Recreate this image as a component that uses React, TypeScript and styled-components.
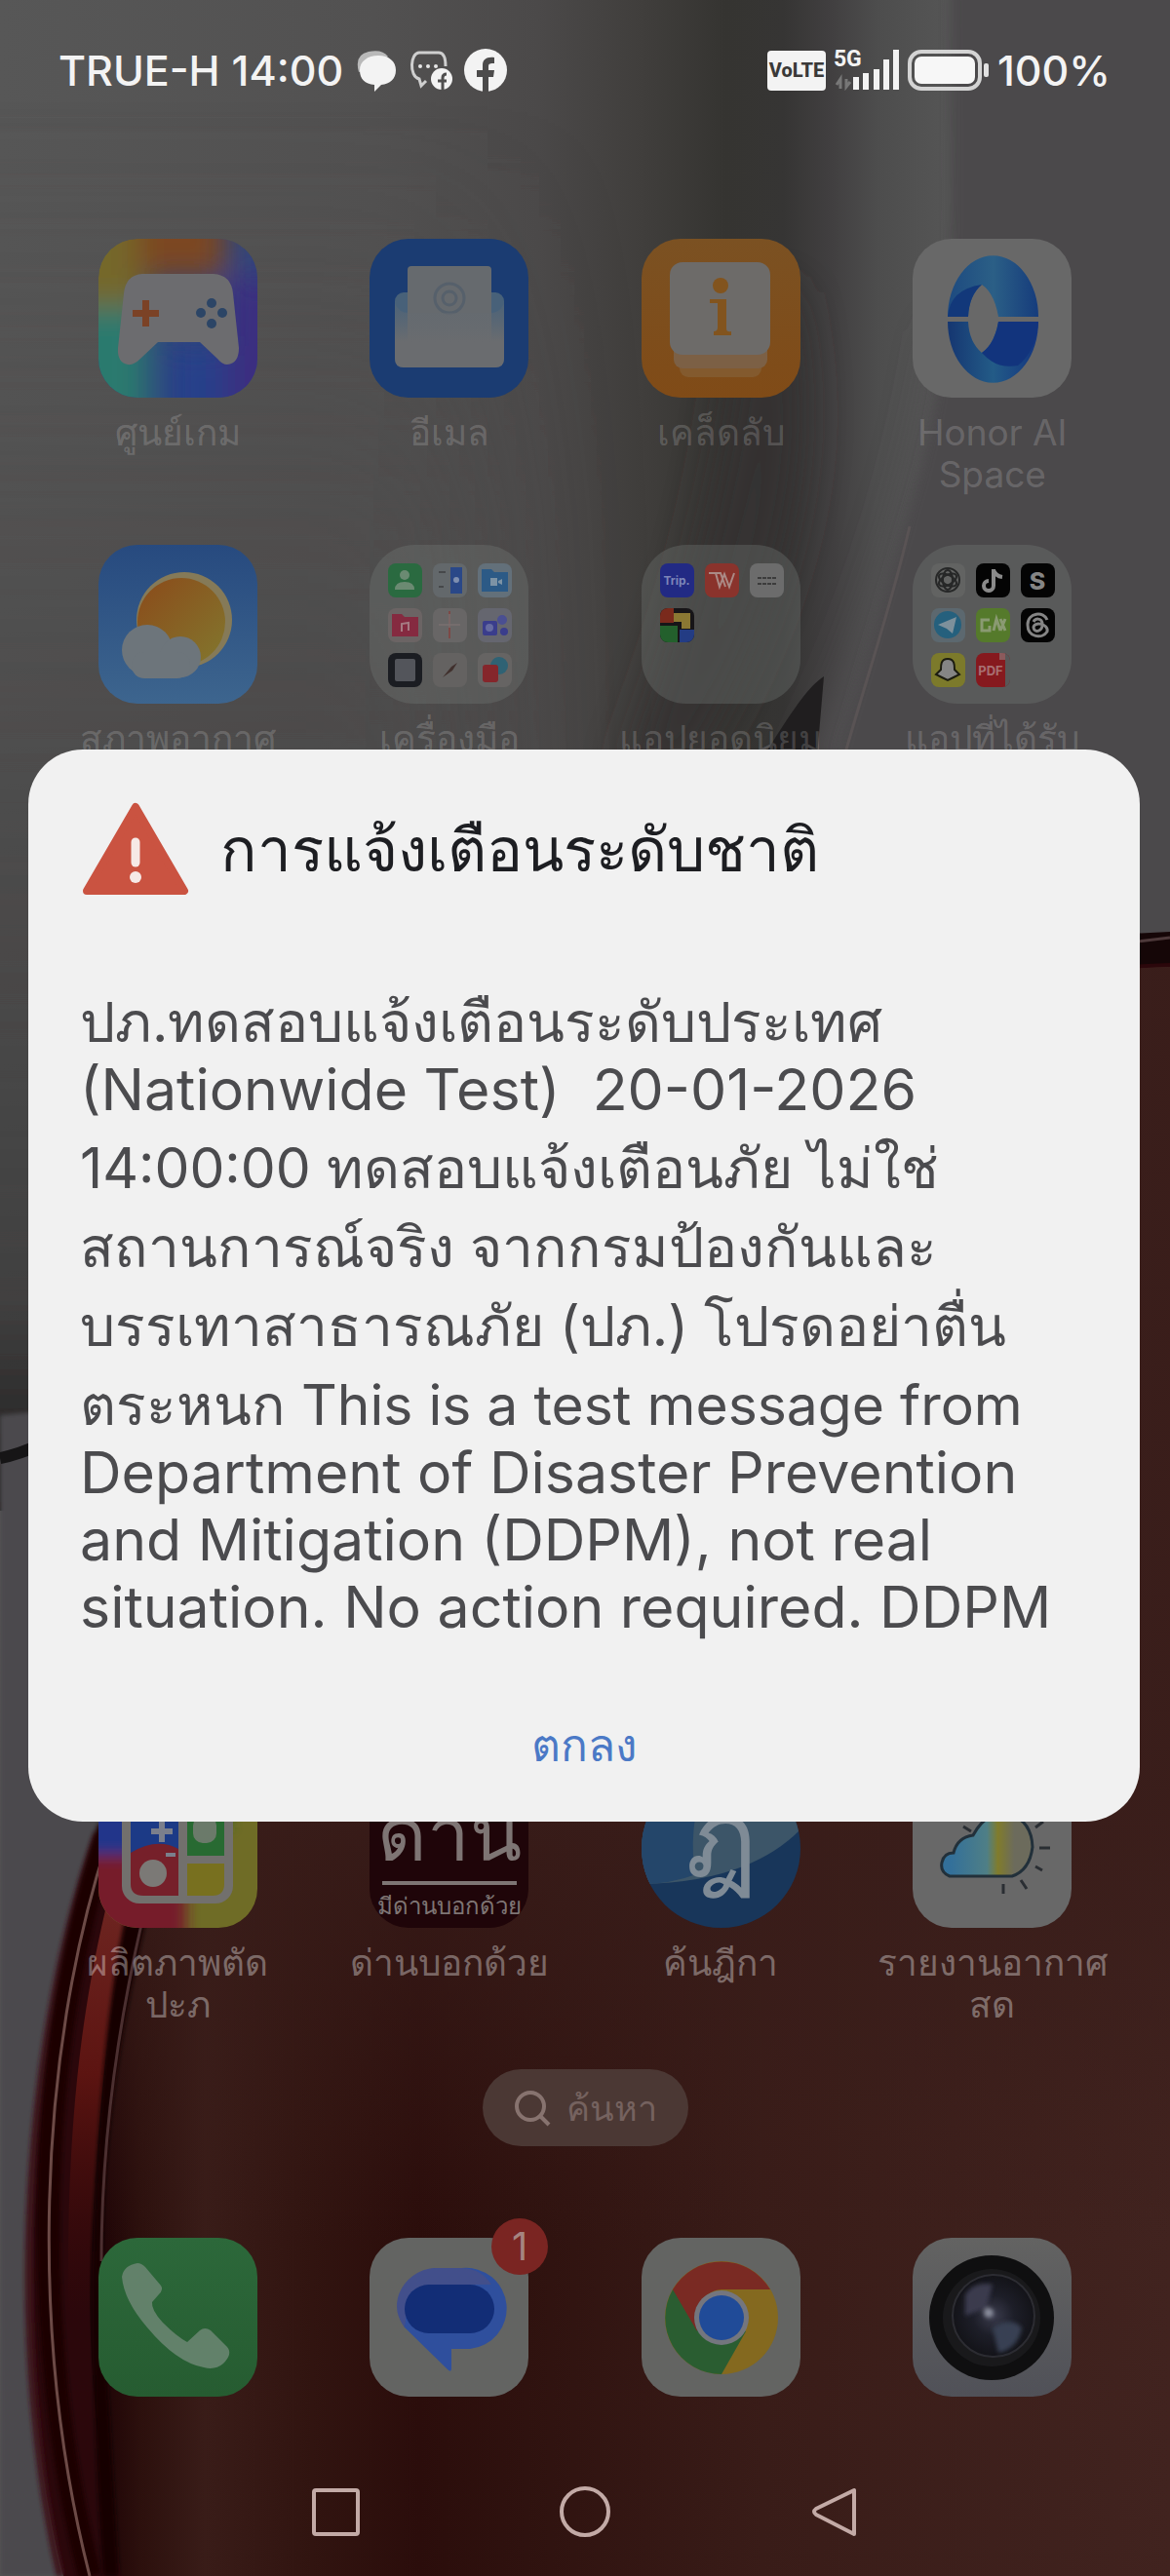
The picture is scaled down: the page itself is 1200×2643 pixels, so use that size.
import React from "react";
import type { ReactNode } from "react";
import styled, { createGlobalStyle } from "styled-components";

const GlobalStyle = createGlobalStyle`
  *, *::before, *::after { box-sizing: border-box; }
  html, body { margin: 0; padding: 0; background: #3a1f1c; }
  button { font: inherit; color: inherit; background: none; border: 0; padding: 0; cursor: pointer; }
  body { font-family: Inter, sans-serif; }
`;

/* ---------- shell ---------- */

const Phone = styled.main`
  position: relative;
  display: grid;
  min-height: 100vh;
  overflow: hidden;
`;

const WallpaperLayer = styled.svg`
  position: absolute;
  inset: 0;
  width: 100%;
  height: 100%;
`;

const Home = styled.div`
  grid-area: 1 / 1;
  position: relative;
  display: flex;
  flex-direction: column;
`;

const StatusBar = styled.header`
  display: flex;
  justify-content: space-between;
  align-items: center;
  height: 144px;
  padding: 0 61px 0 60px;
  color: #f3f3f3;
`;

const StatusGroup = styled.div<{ $gap: number }>`
  display: flex;
  align-items: center;
  gap: ${(p) => p.$gap}px;
  font-weight: 500;
`;

const StatusText = styled.span`
  font-size: 43px;
  line-height: 48px;
`;

const VolteBadge = styled.span`
  display: flex;
  align-items: center;
  justify-content: center;
  width: 60px;
  height: 41px;
  border-radius: 4px;
  background: #f3f3f3;
  color: #3a3938;
  font: 800 20px/24px Roboto, sans-serif;
`;

const SignalBlock = styled.span`
  display: grid;
  height: 42px;
`;

const NetworkText = styled.span`
  grid-area: 1 / 1;
  font: 700 23px/20px Roboto, sans-serif;
`;

const SignalArt = styled.svg`
  grid-area: 1 / 1;
`;

/* ---------- app grid ---------- */

const AppGrid = styled.section`
  display: grid;
  grid-template-columns: repeat(4, 1fr);
  grid-template-rows: repeat(5, 314px) 308px;
  padding: 101px 43px 0;
`;

const AppCell = styled.button<{ $row: number; $dim?: boolean }>`
  grid-row: ${(p) => p.$row};
  display: flex;
  flex-direction: column;
  align-items: center;
  gap: 14px;
  color: ${(p) => (p.$dim ? "rgba(255,255,255,0.18)" : "rgba(255,255,255,0.36)")};
`;

const IconTile = styled.span<{ $round?: boolean }>`
  display: block;
  flex: none;
  width: 163px;
  height: 163px;
  border-radius: ${(p) => (p.$round ? "50%" : "40px")};
  overflow: hidden;
`;

const AppLabel = styled.span`
  font-size: 37px;
  line-height: 43px;
  text-align: center;
  white-space: pre;
`;

const FolderTile = styled.span`
  display: grid;
  flex: none;
  grid-template-columns: repeat(3, 35px);
  grid-auto-rows: 35px;
  gap: 11px;
  width: 163px;
  height: 163px;
  padding: 19px;
  border-radius: 46px;
  background: rgba(118, 122, 120, 0.34);
`;

const Mini = styled.svg`
  display: block;
  width: 35px;
  height: 35px;
  border-radius: 8px;
`;

/* ---------- search, dock, navigation ---------- */

const SearchPill = styled.button`
  display: flex;
  align-items: center;
  justify-content: center;
  align-self: center;
  gap: 16px;
  width: 211px;
  height: 79px;
  border-radius: 40px;
  background: #4b3834;
  color: #75625f;
  font-size: 36px;
  line-height: 48px;
`;

const Dock = styled.nav`
  display: grid;
  grid-template-columns: repeat(4, 1fr);
  justify-items: center;
  margin-top: 94px;
  padding: 0 43px;
`;

const DockButton = styled.button`
  position: relative;
  display: block;
`;

const Badge = styled.span`
  position: absolute;
  top: -20px;
  right: -20px;
  width: 58px;
  height: 58px;
  border-radius: 50%;
  background: #7a2522;
  color: #a58481;
  font-size: 40px;
  line-height: 58px;
  text-align: center;
`;

const SystemNav = styled.nav`
  display: flex;
  justify-content: center;
  gap: 203px;
  margin-top: 92px;
  padding-bottom: 36px;
`;

const NavButton = styled.button`
  display: block;
  width: 53px;
  height: 53px;
`;

/* ---------- alert ---------- */

const DialogLayer = styled.div`
  grid-area: 1 / 1;
  position: relative;
  display: flex;
  flex-direction: column;
  justify-content: center;
  padding: 0 31px 5px 29px;
`;

const Dialog = styled.section`
  border-radius: 56px;
  background: #f1f1f1;
  padding: 53px 53px 49px;
`;

const DialogHeader = styled.header`
  display: flex;
  align-items: center;
  gap: 30px;
`;

const DialogTitle = styled.h1`
  margin: 0;
  color: #1d1e22;
  font-size: 62px;
  font-weight: 400;
  line-height: 100px;
`;

const Message = styled.p`
  margin: 80px 0 0;
  color: #4b4b4e;
`;

/* Thai lines carry extra room above for stacked vowels and tone marks. */
const Line = styled.span<{ $latin?: boolean }>`
  display: block;
  padding-top: ${(p) => (p.$latin ? 0 : 12)}px;
  font-size: ${(p) => (p.$latin ? 59 : 57)}px;
  line-height: 69px;
  white-space: pre-wrap;
`;

const ConfirmButton = styled.button`
  display: block;
  margin: 77px auto 0;
  padding: 0 48px;
  color: #4b79c6;
  font-size: 46px;
  line-height: 60px;
`;

/* ---------- drawings ---------- */

const Wallpaper = () => (
  <WallpaperLayer viewBox="0 0 1200 2643" preserveAspectRatio="none" aria-hidden="true">
    <defs>
      <linearGradient id="wGrey" x1="0" x2="1" y1="0" y2="0">
        <stop offset="0" stopColor="#575757" />
        <stop offset=".32" stopColor="#525151" />
        <stop offset=".46" stopColor="#4b4949" />
        <stop offset=".55" stopColor="#403e3c" />
        <stop offset=".62" stopColor="#353431" />
        <stop offset=".67" stopColor="#363534" />
        <stop offset=".71" stopColor="#413f40" />
        <stop offset=".75" stopColor="#4d4d4d" />
        <stop offset=".81" stopColor="#555555" />
      </linearGradient>
      <linearGradient id="wLeft" x1="0" x2="0" y1="0" y2="1">
        <stop offset="0" stopColor="#4a4848" stopOpacity="0" />
        <stop offset=".3" stopColor="#4a4848" stopOpacity=".5" />
        <stop offset=".85" stopColor="#3c3b3b" stopOpacity="1" />
        <stop offset="1" stopColor="#111010" />
      </linearGradient>
      <linearGradient id="wRed" x1="100" x2="1200" y1="0" y2="0" gradientUnits="userSpaceOnUse">
        <stop offset="0" stopColor="#1d0305" />
        <stop offset=".04" stopColor="#2c100d" />
        <stop offset=".1" stopColor="#391c18" />
        <stop offset=".2" stopColor="#311410" />
        <stop offset=".3" stopColor="#2b0d0b" />
        <stop offset=".4" stopColor="#2f120f" />
        <stop offset=".62" stopColor="#391c18" />
        <stop offset="1" stopColor="#41231f" />
      </linearGradient>
      <linearGradient id="wTop" x1="0" x2="0" y1="1850" y2="2300" gradientUnits="userSpaceOnUse">
        <stop offset="0" stopColor="#391d1a" stopOpacity=".9" />
        <stop offset="1" stopColor="#391d1a" stopOpacity="0" />
      </linearGradient>
      <linearGradient id="wBand" x1="0" x2="0" y1="0" y2="1">
        <stop offset="0" stopColor="#6d2420" />
        <stop offset=".4" stopColor="#5c1411" />
        <stop offset="1" stopColor="#3a0908" stopOpacity="0" />
      </linearGradient>
      <filter id="soft2" x="-50%" width="200%"><feGaussianBlur stdDeviation="2" /></filter>
      <filter id="soft6" x="-50%" width="200%"><feGaussianBlur stdDeviation="6" /></filter>
      <filter id="soft24" x="-50%" width="200%"><feGaussianBlur stdDeviation="24" /></filter>
      <filter id="soft60" x="-50%" width="200%" y="0" height="1"><feGaussianBlur stdDeviation="80 0" /></filter>
    </defs>
    <rect width="1200" height="2643" fill="url(#wGrey)" />
    <path d="M760 300 L810 300 C850 480 800 640 700 800 L640 800 C700 640 750 480 760 300Z" fill="#343332" filter="url(#soft24)" />
    <path d="M970 340 C950 480 900 640 820 800 L900 800 L1010 340Z" fill="#525152" filter="url(#soft24)" />
    <path d="M975 -20 L1220 -20 L1220 1000 L800 1000 C860 760 900 640 945 480 C965 400 976 320 976 200Z" fill="#4c4a4c" filter="url(#soft6)" />
    <path d="M933 540 C912 630 890 690 862 790" fill="none" stroke="#595354" strokeWidth="3" />
    <path d="M845 694 C826 706 806 740 768 800 L836 800Z" fill="#201e1f" />
    <rect x="-400" width="900" height="1450" y="100" fill="url(#wLeft)" opacity=".8" filter="url(#soft60)" />
    <path d="M0 1452 L120 1440 V2643 H0Z" fill="#4c4a4d" filter="url(#soft2)" />
    <path d="M0 1496 C30 1490 50 1478 80 1460" stroke="#161516" strokeWidth="12" fill="none" />
    <path d="M1100 962 Q1150 958 1200 956 V1010 H1100Z" fill="#150607" />
    <path d="M1150 968 L1200 962" stroke="#4d393a" strokeWidth="3" />
    <path d="M65 2643 C10 2430 15 2120 97 1891 C250 1450 700 1000 1200 988 V2643Z" fill="#2b070b" />
    <path d="M125 2643 C75 2430 80 2170 150 1900 C300 1450 700 1004 1200 992 V2643Z" fill="url(#wRed)" />
    <path d="M125 2643 C75 2430 80 2170 150 1900 C300 1450 700 1004 1200 992 V2643Z" fill="url(#wTop)" />
    <path d="M62 2643 C12 2430 16 2120 100 1881" fill="none" stroke="#3d161b" strokeWidth="8" filter="url(#soft2)" />
    <path d="M112 1875 C35 2100 30 2400 92 2643" fill="none" stroke="#1a0205" strokeWidth="24" filter="url(#soft2)" />
    <path d="M110 1890 C38 2110 30 2400 92 2643" fill="none" stroke="#6c4a46" strokeWidth="3" />
    <path d="M108 1960 L134 1960 C108 2080 96 2200 92 2380 L70 2380 C68 2200 80 2080 108 1960Z" fill="url(#wBand)" />
    <path d="M130 1960 L152 1960 C118 2110 106 2200 104 2340 L122 2643 L106 2643 C88 2400 94 2120 130 1960Z" fill="#190206" filter="url(#soft2)" />
    <path d="M146 1970 C116 2100 104 2220 104 2320" fill="none" stroke="#4b2f30" strokeWidth="3" />
  </WallpaperLayer>
);

const Art = ({ children }: { children: ReactNode }) => (
  <svg width="163" height="163" viewBox="0 0 163 163" aria-hidden="true" display="block">
    {children}
  </svg>
);

const GameArt = () => (
  <Art>
    <defs>
      <filter id="gBlur" x="-50%" y="-50%" width="200%" height="200%"><feGaussianBlur stdDeviation="15" /></filter>
    </defs>
    <rect width="163" height="163" fill="#31457a" />
    <g filter="url(#gBlur)">
      <rect x="-40" y="-40" width="90" height="110" fill="#74682c" />
      <rect x="40" y="-40" width="90" height="80" fill="#7c4623" />
      <rect x="-40" y="70" width="90" height="130" fill="#2c7a6e" />
      <rect x="130" y="40" width="70" height="150" fill="#3b2f80" />
      <rect x="70" y="110" width="60" height="90" fill="#26418a" />
    </g>
    <path d="M45 36H118Q136 37 138 56L144 112Q144 128 132 129Q127 129 122 123L104 106H61L43 123Q36 130 30 129Q19 127 20 112L26 56Q28 37 45 36Z" fill="#6c6c6f" />
    <path d="M45 63h7v10h10v7H52v10h-7V80H35v-7h10z" fill="#7b4226" />
    <g fill="#2c4566"><circle cx="116" cy="66" r="5" /><circle cx="116" cy="87" r="5" /><circle cx="105" cy="76" r="5" /><circle cx="127" cy="76" r="5" /></g>
  </Art>
);

const MailArt = () => (
  <Art>
    <defs><linearGradient id="mG" x1="0" x2="0" y1="0" y2="1"><stop offset="0" stopColor="#626a72" stopOpacity=".2" /><stop offset=".6" stopColor="#6a6c6f" /></linearGradient></defs>
    <rect width="163" height="163" fill="#1b3c72" />
    <rect x="26" y="55" width="112" height="77" rx="9" fill="#486179" />
    <rect x="39" y="28" width="86" height="90" rx="4" fill="#666a6e" />
    <g fill="none" stroke="#56606b" strokeWidth="3"><circle cx="82" cy="61" r="15" /><circle cx="82" cy="61" r="7" /></g>
    <path d="M26 66Q30 76 40 76H124Q134 76 138 66V123Q138 132 129 132H35Q26 132 26 123Z" fill="url(#mG)" />
  </Art>
);

const TipsArt = () => (
  <Art>
    <defs><linearGradient id="tG" x1="0" x2="0" y1="0" y2="1"><stop offset="0" stopColor="#7b5122" /><stop offset="1" stopColor="#804b17" /></linearGradient></defs>
    <rect width="163" height="163" fill="url(#tG)" />
    <rect x="39" y="105" width="84" height="37" rx="9" fill="#835a2e" />
    <rect x="33" y="100" width="96" height="33" rx="9" fill="#7c6045" />
    <rect x="29" y="24" width="103" height="95" rx="13" fill="#6d6b69" />
    <circle cx="81" cy="48" r="8" fill="#82541e" />
    <path d="M70 62H87V92Q87 96 92 95V99H74V95Q78 95 78 91V66H70Z" fill="#82541e" />
  </Art>
);

const HonorArt = () => (
  <Art>
    <defs>
      <linearGradient id="hA" x1="0" x2="1"><stop offset="0" stopColor="#1d4a80" /><stop offset=".5" stopColor="#2b5f86" /><stop offset="1" stopColor="#163c7c" /></linearGradient>
      <linearGradient id="hB" x1="0" x2="1"><stop offset="0" stopColor="#153671" /><stop offset=".5" stopColor="#235b87" /><stop offset="1" stopColor="#133580" /></linearGradient>
    </defs>
    <rect width="163" height="163" fill="#686868" />
    <path d="M36 80A46 62 0 0 1 129 80H88Q84 56 71 47Q58 58 57 80Z" fill="url(#hA)" />
    <path d="M36 85A46 62 0 0 0 129 85H88Q84 108 71 117Q58 106 57 85Z" fill="url(#hB)" />
    <path d="M36 80Q38 52 71 47Q58 58 57 80Z" fill="#12387a" />
    <path d="M71 117Q84 108 88 85H129Q126 116 108 130Q86 134 71 117Z" fill="#12347d" />
  </Art>
);

const WeatherArt = () => (
  <Art>
    <defs>
      <linearGradient id="sky" x1="0" x2="0" y1="0" y2="1"><stop offset="0" stopColor="#274a7f" /><stop offset="1" stopColor="#3d658e" /></linearGradient>
      <linearGradient id="sun" x1="0" x2="1" y1="0" y2="1"><stop offset=".1" stopColor="#8a4f1c" /><stop offset=".9" stopColor="#83732c" /></linearGradient>
    </defs>
    <rect width="163" height="163" fill="url(#sky)" />
    <circle cx="88" cy="77" r="49" fill="#857a58" />
    <circle cx="85" cy="79" r="45" fill="url(#sun)" />
    <g fill="#6d757b"><circle cx="50" cy="108" r="26" /><circle cx="84" cy="115" r="21" /><rect x="34" y="110" width="60" height="27" rx="13" /></g>
  </Art>
);

const JigsawArt = () => (
  <Art>
    <defs><filter id="jB" x="-50%" y="-50%" width="200%" height="200%"><feGaussianBlur stdDeviation="7" /></filter></defs>
    <rect width="163" height="163" fill="#6f6c26" />
    <g filter="url(#jB)">
      <rect x="-40" y="-40" width="100" height="128" fill="#22348a" />
      <rect x="-40" y="88" width="130" height="120" fill="#761a2c" />
      <rect x="85" y="-40" width="50" height="100" fill="#2d6b2d" />
    </g>
    <rect x="24" y="20" width="114" height="118" rx="18" fill="#72706d" />
    <path d="M33 28H82V130H46Q33 130 33 118Z" fill="#76202a" />
    <path d="M33 28H82V82Q60 70 33 86Z" fill="#1c3a86" />
    <path d="M91 28H129V89H91Z" fill="#286a32" />
    <path d="M91 97H129V118Q129 130 117 130H91Z" fill="#78701f" />
    <circle cx="56" cy="107" r="14" fill="#7b7976" />
    <path d="M62 53h6v8h8v6h-8v8h-6v-8h-8v-6h8zM69 86h10v4H69z" fill="#7b7f8c" />
    <rect x="97" y="48" width="24" height="28" rx="10" fill="#6b7a6a" />
  </Art>
);

const CheckpointArt = () => (
  <Art>
    <rect width="163" height="163" fill="#1f0509" />
    <g fill="#7e7574" textAnchor="middle">
      <text x="82" y="94" fontSize="78" fontWeight="500">ด่าน</text>
      <rect x="13" y="115" width="138" height="4" />
      <text x="82" y="149" fontSize="24">มีด่านบอกด้วย</text>
    </g>
  </Art>
);

const LawArt = () => (
  <Art>
    <rect width="163" height="163" fill="#18365a" />
    <path d="M0 0H163V62Q110 116 0 118Z" fill="#3c5568" />
    <path d="M0 118Q30 118 56 108Q46 70 66 0H0Z" fill="#24466a" />
    <text x="82" y="110" fontSize="110" fill="#7f8b96" textAnchor="middle" fontWeight="500">ฎ</text>
  </Art>
);

const ForecastArt = () => (
  <Art>
    <defs><linearGradient id="fG" x1="0" x2="1"><stop offset=".1" stopColor="#33709a" /><stop offset=".5" stopColor="#4f7f86" /><stop offset=".62" stopColor="#807c2c" /><stop offset=".8" stopColor="#6c6b5c" /></linearGradient></defs>
    <rect width="163" height="163" fill="#686868" />
    <path d="M38 110Q28 106 30 96Q32 86 42 86Q46 70 62 68Q76 42 100 46Q122 54 123 80Q120 104 102 110Z" fill="url(#fG)" stroke="#22303a" strokeWidth="3" />
    <path d="M52 59l8 5M126 60l8-6M130 81h11M126 100l7 4M111 114l6 9M93 118v10" stroke="#2a2e33" strokeWidth="3" />
  </Art>
);

const PhoneArt = () => (
  <Art>
    <defs><linearGradient id="pG" x1="0" x2="0" y1="0" y2="1"><stop offset="0" stopColor="#2c683a" /><stop offset="1" stopColor="#265c31" /></linearGradient></defs>
    <rect width="163" height="163" fill="url(#pG)" />
    <path d="M24 40Q26 28 40 26Q44 26 48 30L64 49Q67 53 62 58L55 66Q54 74 66 87Q80 101 91 107L104 95Q109 91 115 95L132 112Q138 119 128 129Q120 136 108 133Q80 128 50 92Q26 64 24 40Z" fill="#62816a" />
  </Art>
);

const MessagesArt = () => (
  <Art>
    <rect width="163" height="163" fill="#636462" />
    <path d="M67 31H95A41 41 0 0 1 103 114H84V134Q84 139 80 135L36 92A42 42 0 0 1 67 31Z" fill="#2f4f9d" />
    <path d="M30 58A42 42 0 0 1 67 31H95Q115 32 125 48H62Q40 50 36 92Q24 76 30 58Z" fill="#424f8b" />
    <rect x="36" y="48" width="92" height="50" rx="25" fill="#122d76" />
  </Art>
);

const ChromeArt = () => (
  <Art>
    <rect width="163" height="163" fill="#636462" />
    <circle cx="82" cy="82" r="58" fill="#84691f" />
    <path d="M82 82L32 53A58 58 0 0 0 82 140L107 96Z" fill="#2a5d31" />
    <path d="M32 53A58 58 0 0 1 132 53H82Q66 54 56 72L57 96Z" fill="#7a2a23" />
    <circle cx="82" cy="82" r="28" fill="#74767e" />
    <circle cx="82" cy="82" r="23" fill="#204b98" />
  </Art>
);

const CameraArt = () => (
  <Art>
    <defs>
      <linearGradient id="cB" x1="0" x2="0" y1="0" y2="1"><stop offset="0" stopColor="#636362" /><stop offset="1" stopColor="#505158" /></linearGradient>
      <radialGradient id="cL" cx=".5" cy=".5"><stop offset="0" stopColor="#3a3b4c" /><stop offset=".5" stopColor="#1d1e28" /><stop offset="1" stopColor="#131318" /></radialGradient>
      <filter id="cS"><feGaussianBlur stdDeviation="2" /></filter>
    </defs>
    <rect width="163" height="163" fill="url(#cB)" />
    <circle cx="81" cy="82" r="64" fill="#0f0f10" />
    <circle cx="81" cy="82" r="50" fill="#19191b" />
    <circle cx="83" cy="80" r="42" fill="url(#cL)" stroke="#2c2c32" strokeWidth="2" />
    <g filter="url(#cS)">
      <path d="M54 58Q64 44 82 48L76 72L54 80Z" fill="#3b3a4e" />
      <path d="M82 92Q100 80 112 92Q108 114 88 118Z" fill="#384052" />
      <circle cx="78" cy="77" r="5" fill="#8a8d9c" />
    </g>
  </Art>
);

/* 35-unit drawings shown inside the folders */
const M = ({ bg, children }: { bg: string; children?: ReactNode }) => (
  <Mini viewBox="0 0 35 35" aria-hidden="true">
    <rect width="35" height="35" fill={bg} />
    {children}
  </Mini>
);

const ToolsFolder = () => (
  <FolderTile>
    <M bg="#2a6a40"><circle cx="17" cy="12" r="5" fill="#6b8a72" /><path d="M7 27q0-8 10-8t10 8z" fill="#6b8a72" /></M>
    <M bg="#63686b"><rect x="18" y="4" width="12" height="27" fill="#2a4888" /><path d="M6 9h7M6 24h5" stroke="#46484a" strokeWidth="2" /><circle cx="24" cy="17" r="3" fill="#7f8fb0" /></M>
    <M bg="#63707a"><path d="M4 6h10l3 3h14v20H4z" fill="#2c5a86" /><path d="M13 15h7v8h-7zM21 18l4-2v6l-4-2z" fill="#7d93a5" /></M>
    <M bg="#6b6464"><path d="M4 6h10l3 3h14v20H4z" fill="#852a40" /><path d="M14 24v-8l7-1v8" stroke="#a57a82" strokeWidth="2" fill="none" /></M>
    <M bg="#686666"><path d="M17 3v28" stroke="#85403d" strokeWidth="1.5" /><path d="M6 17h22M17 6v14" stroke="#7a7070" strokeWidth="1.5" /></M>
    <M bg="#65666f"><rect x="5" y="13" width="15" height="15" rx="2" fill="#3a3d8c" /><circle cx="25" cy="12" r="5" fill="#4a4f92" /><circle cx="27" cy="24" r="4" fill="#3a3d8c" /><circle cx="12" cy="20" r="4" fill="#666ba0" /></M>
    <M bg="#1b1d22"><rect x="7" y="6" width="21" height="23" rx="2" fill="#53555b" /></M>
    <M bg="#646261"><path d="M10 25l9-11 6-4-5 8z" fill="#40302d" /></M>
    <M bg="#666463"><circle cx="22" cy="13" r="9" fill="#2f6274" /><rect x="5" y="12" width="16" height="18" rx="3" fill="#85262b" /></M>
  </FolderTile>
);

const PopularFolder = () => (
  <FolderTile>
    <M bg="#222a84"><text x="17" y="22" fontSize="12" fontWeight="700" textAnchor="middle" fill="#7c86b8">Trip.</text></M>
    <M bg="#8a332c"><path d="M4 10h7l4 14 5-13 5 13 5-14M11 10h5l5 14" stroke="#ab8a86" strokeWidth="2" fill="none" /></M>
    <M bg="#6c6c6c"><path d="M8 15h19M8 21h19" stroke="#3c3c3c" strokeWidth="2" strokeDasharray="4 1" /></M>
    <M bg="#171518"><path d="M0 0h14v15H0z" fill="#7a2a1c" /><path d="M14 5h17v16h-9v-7h-8z" fill="#8b7833" /><path d="M0 18h18v17H0z" fill="#23602c" /><path d="M20 22h15v13H20z" fill="#233c84" /></M>
  </FolderTile>
);

const RecommendedFolder = () => (
  <FolderTile>
    <M bg="#626362"><g fill="none" stroke="#262727" strokeWidth="2"><circle cx="17" cy="17" r="12" /><ellipse cx="17" cy="17" rx="5" ry="10" /><ellipse cx="17" cy="17" rx="5" ry="10" transform="rotate(60 17 17)" /><ellipse cx="17" cy="17" rx="5" ry="10" transform="rotate(120 17 17)" /></g></M>
    <M bg="#040404"><path d="M18 6v17a5 5 0 1 1-5-5M18 7q2 6 9 7" fill="none" stroke="#8a8a8a" strokeWidth="4" /></M>
    <M bg="#040404"><text x="17" y="27" fontSize="25" fontWeight="800" textAnchor="middle" fill="#858585">S</text></M>
    <M bg="#5c686f"><circle cx="17" cy="17" r="14" fill="#25607d" /><path d="M7 17l19-8-4 17-6-5z" fill="#7d909b" /></M>
    <M bg="#557a2b"><path d="M14 12H6v11h8v-5M18 23l3-12 4 12M25 11l5 12M30 11l-5 12" stroke="#8a9a72" strokeWidth="3" fill="none" /></M>
    <M bg="#040404"><path d="M27 12C24 3 7 4 7 17S22 32 27 24C29 16 13 13 13 20c1 6 10 4 9-5-1-5-7-5-9-1" fill="none" stroke="#858585" strokeWidth="3" /></M>
    <M bg="#7c7a2b"><path d="M17 6c7 0 7 6 7 11l5 5-6 3-6 3-6-3-6-3 5-5c0-5 0-11 7-11z" fill="#858585" stroke="#1c1c10" strokeWidth="2" /></M>
    <M bg="#86191e"><path d="M28 0h7v35h-5V7z" fill="#585858" /><path d="M24 0h6v7h-6z" fill="#8c5a5c" /><text x="15" y="23" fontSize="13" fontWeight="700" textAnchor="middle" fill="#a87073">PDF</text></M>
  </FolderTile>
);

interface AppEntry {
  label: string;
  row: number;
  art: ReactNode;
  folder?: boolean;
  round?: boolean;
}

const apps: AppEntry[] = [
  { label: "ศูนย์เกม", row: 1, art: <GameArt /> },
  { label: "อีเมล", row: 1, art: <MailArt /> },
  { label: "เคล็ดลับ", row: 1, art: <TipsArt /> },
  { label: "Honor AI\nSpace", row: 1, art: <HonorArt /> },
  { label: "สภาพอากาศ", row: 2, art: <WeatherArt /> },
  { label: "เครื่องมือ", row: 2, art: <ToolsFolder />, folder: true },
  { label: "แอปยอดนิยม", row: 2, art: <PopularFolder />, folder: true },
  { label: "แอปที่ได้รับ", row: 2, art: <RecommendedFolder />, folder: true },
  { label: "ผลิตภาพตัด\nปะภ", row: 6, art: <JigsawArt /> },
  { label: "ด่านบอกด้วย", row: 6, art: <CheckpointArt /> },
  { label: "ค้นฎีกา", row: 6, art: <LawArt />, round: true },
  { label: "รายงานอากาศ\nสด", row: 6, art: <ForecastArt /> },
];

const dock = [
  { name: "โทรศัพท์", art: <PhoneArt />, badge: 0 },
  { name: "ข้อความ", art: <MessagesArt />, badge: 1 },
  { name: "Chrome", art: <ChromeArt />, badge: 0 },
  { name: "กล้อง", art: <CameraArt />, badge: 0 },
];

const message = [
  { text: "ปภ.ทดสอบแจ้งเตือนระดับประเทศ" },
  { text: "(Nationwide Test)  20-01-2026", latin: true },
  { text: "14:00:00 ทดสอบแจ้งเตือนภัย ไม่ใช่" },
  { text: "สถานการณ์จริง จากกรมป้องกันและ" },
  { text: "บรรเทาสาธารณภัย (ปภ.) โปรดอย่าตื่น" },
  { text: "ตระหนก This is a test message from" },
  { text: "Department of Disaster Prevention", latin: true },
  { text: "and Mitigation (DDPM), not real", latin: true },
  { text: "situation. No action required. DDPM", latin: true },
];

export default function App() {
  return (
    <Phone>
      <GlobalStyle />
      <Wallpaper />
      <Home>
        <StatusBar>
          <StatusGroup $gap={12}>
            <StatusText>TRUE-H</StatusText>
            <StatusText>14:00</StatusText>
            <svg width="44" height="44" viewBox="0 0 44 44" aria-hidden="true">
              <path d="M4 24Q-1 6 14 3Q28 0 34 8L20 20Z" fill="#b9b9b9" />
              <path d="M24 7c11 0 18 6 18 15s-6 14-15 15l-7 7v-7C10 36 5 31 5 22S13 7 24 7z" fill="#f3f3f3" />
            </svg>
            <svg width="44" height="44" viewBox="0 0 44 44" aria-hidden="true">
              <path d="M17 33l-5 5-2-7C-1 28 1 4 10 4h20c5 0 7 5 7 14" fill="none" stroke="#cfcfcf" strokeWidth="3" />
              <g fill="#e6e6e6"><circle cx="11" cy="18" r="2" /><circle cx="19" cy="18" r="2" /><circle cx="27" cy="18" r="2" /></g>
              <circle cx="33" cy="31" r="11" fill="#f3f3f3" />
              <path d="M34 42V30q0-4 4-4M29 33h9" fill="none" stroke="#4f4e4e" strokeWidth="3" />
            </svg>
            <svg width="44" height="44" viewBox="0 0 44 44" aria-hidden="true">
              <circle cx="22" cy="22" r="22" fill="#f3f3f3" />
              <path d="M19 44V29h-6v-7h6v-5c0-6 4-9 12-8v6c-4 0-6 0-6 3v4h6l-1 7h-5v15z" fill="#4c4b4b" />
            </svg>
          </StatusGroup>
          <StatusGroup $gap={8}>
            <VolteBadge>VoLTE</VolteBadge>
            <SignalBlock>
              <NetworkText>5G</NetworkText>
              <SignalArt width="68" height="42" viewBox="0 0 68 42" aria-hidden="true">
                <path d="M20 28h6v13h-6zM30 24h6v17h-6zM41 20h6v21h-6zM51 10h6v31h-6zM61 0h6v41h-6z" fill="#f3f3f3" />
                <path d="M3 36l4-6v10M13 30v8l4-5" fill="none" stroke="#777" strokeWidth="3" />
              </SignalArt>
            </SignalBlock>
            <svg width="84" height="42" viewBox="0 0 84 42" aria-hidden="true">
              <rect x="2" y="2" width="72" height="38" rx="12" fill="none" stroke="#d4d4d4" strokeWidth="4" />
              <rect x="7" y="7" width="62" height="28" rx="7" fill="#f7f7f7" />
              <rect x="78" y="14" width="5" height="14" rx="2" fill="#e2e2e2" />
            </svg>
            <StatusText>100%</StatusText>
          </StatusGroup>
        </StatusBar>

        <AppGrid>
          {apps.map((app) => (
            <AppCell key={app.label} $row={app.row} $dim={app.row < 3}>
              {app.folder ? app.art : <IconTile $round={app.round}>{app.art}</IconTile>}
              <AppLabel>{app.label}</AppLabel>
            </AppCell>
          ))}
        </AppGrid>

        <SearchPill>
          <svg width="38" height="38" viewBox="0 0 38 38" aria-hidden="true">
            <circle cx="17" cy="17" r="14" fill="none" stroke="#87736f" strokeWidth="4" />
            <path d="M27 27l9 9" stroke="#87736f" strokeWidth="4" />
          </svg>
          ค้นหา
        </SearchPill>

        <Dock>
          {dock.map((item) => (
            <DockButton key={item.name} aria-label={item.name}>
              <IconTile>{item.art}</IconTile>
              {item.badge > 0 && <Badge>{item.badge}</Badge>}
            </DockButton>
          ))}
        </Dock>

        <SystemNav>
          <NavButton aria-label="Recent apps">
            <svg width="53" height="53" viewBox="0 0 53 53" aria-hidden="true"><rect x="4" y="4" width="45" height="45" rx="2" fill="none" stroke="#c3aaa6" strokeWidth="4" /></svg>
          </NavButton>
          <NavButton aria-label="Home">
            <svg width="53" height="53" viewBox="0 0 53 53" aria-hidden="true"><circle cx="26" cy="26" r="24" fill="none" stroke="#c3aaa6" strokeWidth="4" /></svg>
          </NavButton>
          <NavButton aria-label="Back">
            <svg width="53" height="53" viewBox="0 0 53 53" aria-hidden="true"><path d="M46 4V49L7 29Q3 26 7 23Z" fill="none" stroke="#c3aaa6" strokeWidth="4" strokeLinejoin="round" /></svg>
          </NavButton>
        </SystemNav>
      </Home>

      <DialogLayer>
        <Dialog role="alertdialog" aria-labelledby="alert-title" aria-describedby="alert-text">
          <DialogHeader>
            <svg width="114" height="98" viewBox="0 0 114 98" aria-hidden="true">
              <path d="M57 5L107 91H7Z" fill="#ca5341" stroke="#ca5341" strokeWidth="8" strokeLinejoin="round" />
              <path d="M57 41V62" stroke="#f6e9e6" strokeWidth="9" strokeLinecap="round" />
              <circle cx="57" cy="77" r="6" fill="#f6e9e6" />
            </svg>
            <DialogTitle id="alert-title">การแจ้งเตือนระดับชาติ</DialogTitle>
          </DialogHeader>
          <Message id="alert-text">
            {message.map((line) => (
              <Line key={line.text} $latin={line.latin}>{line.text}</Line>
            ))}
          </Message>
          <ConfirmButton>ตกลง</ConfirmButton>
        </Dialog>
      </DialogLayer>
    </Phone>
  );
}
